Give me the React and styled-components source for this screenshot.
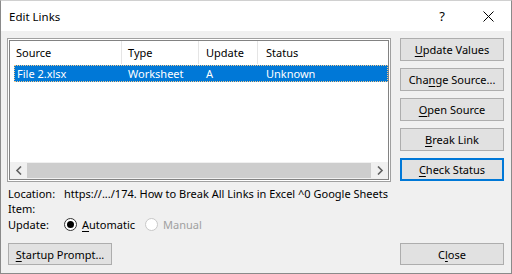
import React from "react";
import styled, { createGlobalStyle } from "styled-components";

const Global = createGlobalStyle`
  html, body {
    margin: 0;
    padding: 0;
    background: #ffffff;
  }
  body {
    font-family: "Noto Sans", "Open Sans", sans-serif;
    font-size: 11px;
    line-height: 15px;
    color: #000;
  }
`;

// window frame
const Win = styled.div`
  width: 512px;
  height: 274px;
  box-sizing: border-box;
  border: 1px solid #8a8a8a;
  border-top-color: #d0d0d0;
  background: #f0f0f0;
  display: flex;
  flex-direction: column;
`;

const TitleBar = styled.div`
  height: 30px;
  flex: 0 0 30px;
  background: #ffffff;
  display: flex;
  align-items: center;
  padding-left: 8px;
`;

const Title = styled.div`
  flex: 1;
  font-size: 11.5px;
  color: #000;
`;

const Help = styled.div`
  width: 46px;
  text-align: center;
  font-size: 13px;
`;

const CloseX = styled.div`
  width: 46px;
  display: flex;
  justify-content: center;
  align-items: center;
`;

const Body = styled.div`
  flex: 1;
  display: flex;
  flex-direction: column;
  padding: 7px 7px 8px 6px;
`;

const Top = styled.div`
  display: grid;
  grid-template-columns: 384px 104px;
  column-gap: 9px;
  height: 144px;
`;

// list view
const List = styled.div`
  box-sizing: border-box;
  border: 1px solid #a0a0a0;
  padding: 1px;
  background: #ffffff;
  display: flex;
`;

const ListInner = styled.div`
  flex: 1;
  border: 1px solid #828282;
  background: #ffffff;
  display: flex;
  flex-direction: column;
  overflow: hidden;
`;

const Header = styled.div`
  display: flex;
  height: 23px;
  flex: 0 0 23px;
  align-items: center;
`;

const HeadCell = styled.div`
  width: ${(p) => p.w}px;
  box-sizing: border-box;
  height: 100%;
  display: flex;
  align-items: center;
  padding-left: ${(p) => p.pad}px;
  border-right: ${(p) => (p.last ? "none" : "1px solid #e5e5e5")};
`;

const Rows = styled.div`
  flex: 1;
  padding: 1px 0 0 4px;
`;

const SelRow = styled.div`
  display: flex;
  height: 17px;
  align-items: center;
  background: #0078d7;
  color: #fff;
  outline: 1px dotted #f5c98a;
  outline-offset: -1px;
`;

const Cell = styled.div`
  width: ${(p) => p.w}px;
  box-sizing: border-box;
  padding-left: ${(p) => p.pad}px;
`;

const HScroll = styled.div`
  height: 17px;
  flex: 0 0 17px;
  background: #f0f0f0;
  display: flex;
  align-items: center;
`;

const Arrow = styled.div`
  width: 17px;
  height: 17px;
  display: flex;
  align-items: center;
  justify-content: center;
`;

const Thumb = styled.div`
  flex: 1;
  height: 15px;
  background: #cdcdcd;
`;

// buttons
const BtnCol = styled.div`
  display: flex;
  flex-direction: column;
  gap: 7px;
`;

const Btn = styled.div`
  box-sizing: border-box;
  height: ${(p) => p.h || 23}px;
  width: ${(p) => (p.w ? `${p.w}px` : "100%")};
  background: #e1e1e1;
  border: ${(p) => (p.focus ? "2px solid #0078d7" : "1px solid #adadad")};
  display: flex;
  align-items: center;
  justify-content: center;
  color: #000;
  font-size: 11px;
`;

const U = styled.span`
  text-decoration: underline;
  text-underline-offset: 2px;
`;

// info lines
const Info = styled.div`
  margin-top: 4px;
  display: flex;
  flex-direction: column;
`;

const Line = styled.div`
  display: flex;
  align-items: center;
  height: ${(p) => p.h || 15}px;
`;

const Label = styled.div`
  width: 56px;
  flex: 0 0 56px;
  padding-left: 1px;
`;

const Radio = styled.div`
  display: flex;
  align-items: center;
  gap: 5px;
  margin-right: 10px;
  color: ${(p) => (p.disabled ? "#a0a0a0" : "#000")};
`;

const Dot = styled.div`
  width: 13px;
  height: 13px;
  box-sizing: border-box;
  border-radius: 50%;
  border: 1px solid ${(p) => (p.disabled ? "#c8c8c8" : "#333")};
  background: #fff;
  display: flex;
  align-items: center;
  justify-content: center;
  &::after {
    content: "";
    display: ${(p) => (p.on ? "block" : "none")};
    width: 7px;
    height: 7px;
    border-radius: 50%;
    background: #000;
  }
`;

const Footer = styled.div`
  margin-top: auto;
  display: flex;
  justify-content: space-between;
  padding-left: 1px;
`;

function App() {
  return (
    <Win>
      <Global />
      <TitleBar>
        <Title>Edit Links</Title>
        <Help>?</Help>
        <CloseX>
          <svg width="11" height="11" viewBox="0 0 11 11">
            <path d="M0.5 0.5 L10.5 10.5 M10.5 0.5 L0.5 10.5" stroke="#000" strokeWidth="1" />
          </svg>
        </CloseX>
      </TitleBar>
      <Body>
        <Top>
          <List>
            <ListInner>
              <Header>
                <HeadCell w={112} pad={6}>Source</HeadCell>
                <HeadCell w={77} pad={6}>Type</HeadCell>
                <HeadCell w={59} pad={7}>Update</HeadCell>
                <HeadCell w={130} pad={8} last>Status</HeadCell>
              </Header>
              <Rows>
                <SelRow>
                  <Cell w={108} pad={3}>File 2.xlsx</Cell>
                  <Cell w={77} pad={6}>Worksheet</Cell>
                  <Cell w={59} pad={7}>A</Cell>
                  <Cell w={130} pad={8}>Unknown</Cell>
                </SelRow>
              </Rows>
              <HScroll>
                <Arrow>
                  <svg width="8" height="9" viewBox="0 0 8 9">
                    <path d="M6 0.5 L2 4.5 L6 8.5" stroke="#606060" strokeWidth="1.6" fill="none" />
                  </svg>
                </Arrow>
                <Thumb />
                <Arrow>
                  <svg width="8" height="9" viewBox="0 0 8 9">
                    <path d="M2 0.5 L6 4.5 L2 8.5" stroke="#606060" strokeWidth="1.6" fill="none" />
                  </svg>
                </Arrow>
              </HScroll>
            </ListInner>
          </List>
          <BtnCol>
            <Btn><span><U>U</U>pdate Values</span></Btn>
            <Btn><span>Cha<U>n</U>ge Source...</span></Btn>
            <Btn><span><U>O</U>pen Source</span></Btn>
            <Btn><span><U>B</U>reak Link</span></Btn>
            <Btn focus><span><U>C</U>heck Status</span></Btn>
          </BtnCol>
        </Top>
        <Info>
          <Line>
            <Label>Location:</Label>
            <span>https://.../174. How to Break All Links in Excel ^0 Google Sheets</span>
          </Line>
          <Line>
            <Label>Item:</Label>
          </Line>
          <Line h={17}>
            <Label>Update:</Label>
            <Radio>
              <Dot on />
              <span><U>A</U>utomatic</span>
            </Radio>
            <Radio disabled>
              <Dot disabled />
              <span>Manual</span>
            </Radio>
          </Line>
        </Info>
        <Footer>
          <Btn w={104} h={22}><span><U>S</U>tartup Prompt...</span></Btn>
          <Btn w={104} h={22}><span>C<U>l</U>ose</span></Btn>
        </Footer>
      </Body>
    </Win>
  );
}

export default App;
